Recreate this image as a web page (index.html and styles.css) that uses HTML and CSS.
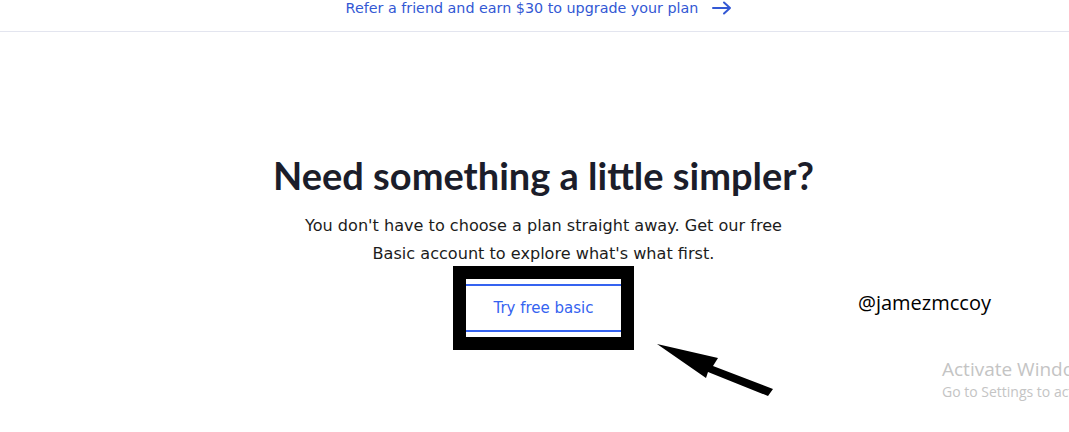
FILE: index.html
```html
<!DOCTYPE html>
<html lang="en">
<head>
<meta charset="utf-8">
<title>Need something a little simpler?</title>
<link rel="stylesheet" href="styles.css">
</head>
<body>
<header class="topbar">
  <a class="refer" href="#">Refer a friend and earn $30 to upgrade your plan
    <svg class="refer-arrow" width="20" height="14" viewBox="0 0 20 14" aria-hidden="true"><path d="M1 7H18M12 1.5L18 7L12 12.5" fill="none" stroke="currentColor" stroke-width="2" stroke-linecap="round" stroke-linejoin="round"/></svg>
  </a>
</header>
<main class="simpler">
  <h1 class="title">Need something a little simpler?</h1>
  <p class="lead">You don't have to choose a plan straight away. Get our free<br>Basic account to explore what's what first.</p>
  <div class="highlight">
    <a class="btn" href="#">Try free basic</a>
  </div>
</main>
<div class="handle">@jamezmccoy</div>
<svg class="pointer" width="1069" height="432" viewBox="0 0 1069 432" aria-hidden="true"><polygon points="657,344 718,358 713,366 773,389 768,396 708,372 706,378" fill="#000"/></svg>
<div class="watermark">
  <div class="wm-title">Activate Windows</div>
  <div class="wm-sub">Go to Settings to activate Windows.</div>
</div>
</body>
</html>
```
FILE: styles.css
```css
html, body {
  margin: 0;
  padding: 0;
  background: #fff;
  width: 1069px;
  height: 432px;
  overflow: hidden;
  position: relative;
  font-family: "DejaVu Sans", "Liberation Sans", sans-serif;
}
.topbar {
  height: 32px;
  border-bottom: 1px solid #e3e5ef;
  display: flex;
  justify-content: center;
  padding-left: 9px;
  box-sizing: border-box;
}
.refer {
  color: #3358d4;
  text-decoration: none;
  font-size: 14.3px;
  display: flex;
  align-items: center;
  gap: 14px;
  height: 16px;
}
.refer-arrow { color: #3358d4; }
.simpler {
  display: flex;
  flex-direction: column;
  align-items: center;
  padding-left: 18px;
  padding-top: 121px;
}
.title {
  margin: 0;
  font-family: "Lato", sans-serif;
  font-size: 38px;
  line-height: 44px;
  font-weight: bold;
  color: #1b1d2a;
}
.lead {
  margin: 15px 0 0;
  font-size: 16.1px;
  line-height: 28px;
  color: #1c1c1c;
  text-align: center;
}
.highlight {
  margin-top: -2px;
  border: 13px solid #000;
  padding: 5px 0;
  background: #fff;
}
.btn {
  display: flex;
  align-items: center;
  justify-content: center;
  width: 155px;
  height: 44px;
  border-top: 2px solid #3563f0;
  border-bottom: 2px solid #3563f0;
  color: #3563f0;
  text-decoration: none;
  font-size: 15px;
}
.handle {
  position: absolute;
  left: 858px;
  top: 289px;
  font-family: "Open Sans", sans-serif;
  font-size: 20px;
  color: #000;
}
.pointer {
  position: absolute;
  left: 0;
  top: 0;
}
.watermark {
  position: absolute;
  left: 942px;
  top: 357px;
  white-space: nowrap;
  color: #c4c4c4;
  font-family: "Open Sans", sans-serif;
}
.wm-title { font-size: 19px; line-height: 24px; }
.wm-sub { font-size: 14px; line-height: 22px; }
```
